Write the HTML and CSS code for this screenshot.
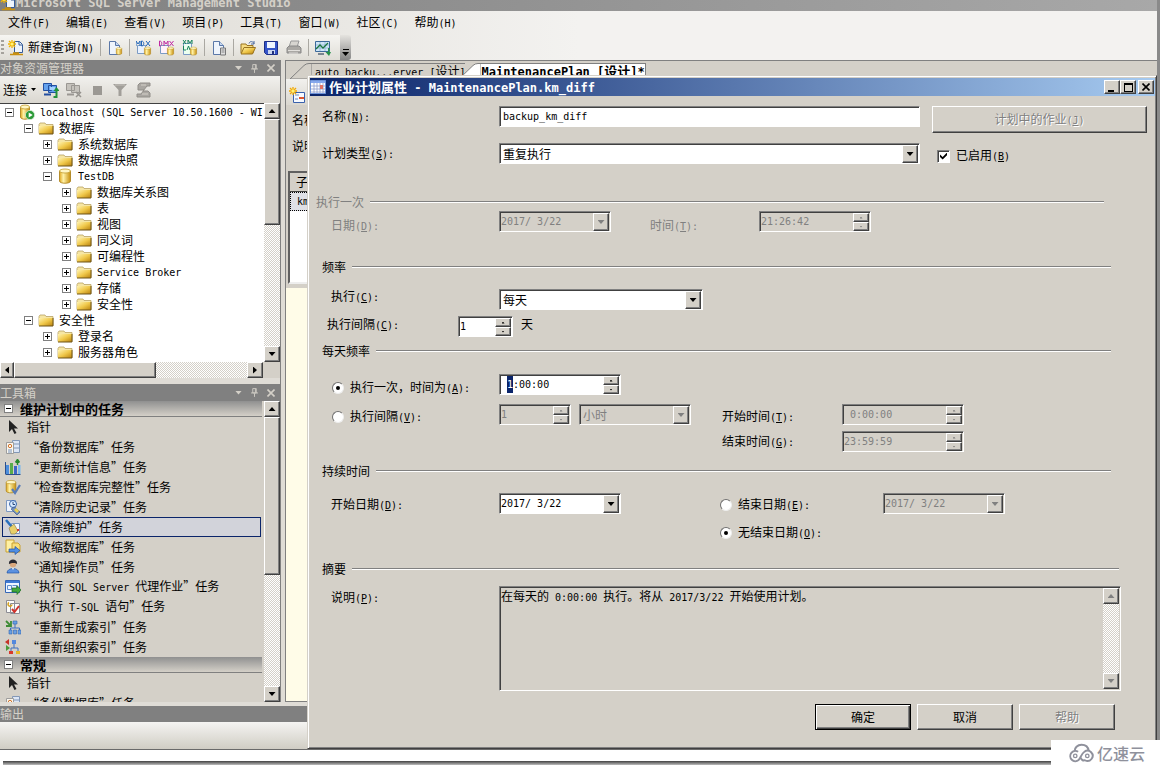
FILE: index.html
```html
<!DOCTYPE html>
<html lang="zh-CN">
<head>
<meta charset="utf-8">
<title>Microsoft SQL Server Management Studio</title>
<link rel="stylesheet" href="styles.css">
</head>
<body>
<svg class="defs" aria-hidden="true">
  <defs>
    <linearGradient id="gold" x1="0" y1="0" x2="1" y2="1"><stop offset="0" stop-color="#fff3b0"/><stop offset=".5" stop-color="#f0c84a"/><stop offset="1" stop-color="#b8800c"/></linearGradient>
    <linearGradient id="cyl" x1="0" x2="1"><stop offset="0" stop-color="#e0a820"/><stop offset=".35" stop-color="#fff2a8"/><stop offset="1" stop-color="#c8900c"/></linearGradient>
  </defs>
  <symbol id="folder" viewBox="0 0 16 16"><path d="M1 4.500 2 3h5l1 1.500h7v9H1z" fill="#f6e6a4" stroke="#b9a264" stroke-width=".8"/><path d="M1 6h14v8H1z" fill="url(#gold)"/><path d="M15 6v8H1" fill="none" stroke="#6e5518"/></symbol>
  <symbol id="db" viewBox="0 0 16 16"><path d="M2.500 3v10c0 3 11 3 11 0V3z" fill="url(#cyl)" stroke="#a87c14" stroke-width=".8"/><ellipse cx="8" cy="3" rx="5.500" ry="2" fill="#fff6c4" stroke="#c09a2c" stroke-width=".8"/></symbol>
  <symbol id="server" viewBox="0 0 16 16"><path d="M1.500 3v10c0 3 9 3 9 0V3z" fill="url(#cyl)" stroke="#a87c14" stroke-width=".8"/><ellipse cx="6" cy="3" rx="4.500" ry="2" fill="#fff6c4" stroke="#c09a2c" stroke-width=".8"/><circle cx="11" cy="11" r="4.600" fill="#2c9a38" stroke="#d6ecd6" stroke-width=".8"/><path d="m9.700 8.500 4 2.500-4 2.500z" fill="#fff"/></symbol>
  <symbol id="page" viewBox="0 0 16 16"><path d="M2.500 1.500h6l4 4v9h-10z" fill="#eef4fc" stroke="#5b78a8"/><path d="M8.500 1.500v4h4" fill="#c7d8f0" stroke="#5b78a8"/></symbol>
  <symbol id="newquery" viewBox="0 0 16 16"><path d="M6.500 1.500h5l3 3v8h-8z" fill="#eef4fc" stroke="#345a98"/><path d="M11 2v3h3" fill="none" stroke="#345a98"/><path d="M4 0v8M0 4h8M1 1l6 6M7 1 1 7" stroke="#f2b400" stroke-width="1.300"/><circle cx="4" cy="4" r="1.600" fill="#fff27a"/><path d="M2 14.500h13M5 13h6" stroke="#c89010" stroke-width="1.600"/></symbol>
  <symbol id="pagedb" viewBox="0 0 16 16"><use href="#page"/><use href="#db" x="8" y="6" width="8" height="10"/></symbol>
  <symbol id="pagetool" viewBox="0 0 16 16"><use href="#page"/><path d="M9.500 8h5v7h-5z" fill="#dedede" stroke="#777"/><path d="M10.500 10h3m-3 2h3" stroke="#888"/></symbol>
  <symbol id="mdx" viewBox="0 0 16 16"><path d="M1.500 5.500h8v8h-8z" fill="#e9f2ff" stroke="#7b9bc4"/><path d="M0 6V1l2 3 2-3v5M5.500 1v5c3 0 3-5 0-5M10 1l4 5m0-5-4 5" fill="none" stroke="#2366b8"/><use href="#db" x="7" y="6" width="9" height="10"/></symbol>
  <symbol id="dmx" viewBox="0 0 16 16"><path d="M1.500 5.500h8v8h-8z" fill="#fff2fb" stroke="#7b9bc4"/><path d="M.5 1v5c3 0 3-5 0-5M5 6V1l2 3 2-3v5M10.500 1l4 5m0-5-4 5" fill="none" stroke="#c02aa2"/><use href="#db" x="7" y="6" width="9" height="10"/></symbol>
  <symbol id="xmla" viewBox="0 0 16 16"><path d="M1.500 3.500h8v11h-8z" fill="#ecfff0" stroke="#7b9bc4"/><path d="m1 0 3 4m0-4L1 4M6 4V0l2 3 2-3v4M1.500 6v4H4M5 10l1.500-4L8 10" fill="none" stroke="#16845a"/><use href="#db" x="7" y="6" width="9" height="10"/></symbol>
  <symbol id="open" viewBox="0 0 16 16"><path d="M1 4h5l1 1.500h6V13H1z" fill="#f7dc82" stroke="#9a7420"/><path d="m1 14 3-6.500h11.500L12.500 14z" fill="url(#gold)" stroke="#9a7420"/><path d="M9 3.500c1-3 4-2 5 0m0-2.500v3h-3" fill="none" stroke="#49679c"/></symbol>
  <symbol id="save" viewBox="0 0 16 16"><path d="M1.500 1.500h13v13h-11l-2-2z" fill="#3454c8" stroke="#1d2e86"/><path d="M4 2h8v6H4z" fill="#eef5ff"/><path d="M5 10h7v4H5z" fill="#c8d4ef"/><path d="M9 11h2v3H9z" fill="#20307c"/></symbol>
  <symbol id="print" viewBox="0 0 16 16"><path d="M5 1h8l-2 6H3z" fill="#d7d5d0" stroke="#999"/><path d="M1 8l2-2h10l2 2v5H1z" fill="#aaa8a4" stroke="#888"/><path d="M2 10.500h12M3 13h9" stroke="#e2e0dc"/></symbol>
  <symbol id="monitor" viewBox="0 0 16 16"><path d="M.5 1.500h14v10H.5z" fill="#cfe5f7" stroke="#3c6a9a"/><path d="M1 5h13M1 8h13M5 2v9m5-9v9" stroke="#7ba5c8" stroke-width=".6"/><path d="m1 9 4-4 3 3 5-5" fill="none" stroke="#1c7540" stroke-width="1.300"/><path d="M3 14h6" stroke="#567" stroke-width="1.500"/><path d="M13 8v4h-2.500l3.500 4 2-4h-1.500V8z" fill="#27914c"/></symbol>
  <symbol id="connect" viewBox="0 0 16 16"><path d="M.5 1.500h8v7h-8zM5.500 3.500h8v7h-8z" fill="#64a2ee" stroke="#234fa0"/><path d="M7 5h5v3H7z" fill="#a5d2ff"/><path d="M1 12.500h7" stroke="#234fa0" stroke-width="2"/><path d="M13.500 8v7h-3" fill="none" stroke="#22923a" stroke-width="2"/><path d="m10.500 9 3-4 3 4z" fill="#22923a"/></symbol>
  <symbol id="disconnect" viewBox="0 0 16 16"><path d="M.5 1.500h8v7h-8zM5.500 3.500h8v7h-8z" fill="#c5c2bc" stroke="#9a9792"/><path d="M1 12.500h7" stroke="#9a9792" stroke-width="2"/><path d="m10 10 5 5m0-5-5 5" stroke="#96938e" stroke-width="1.500"/></symbol>
  <symbol id="stop" viewBox="0 0 16 16"><path d="M4 4h9v9H4z" fill="#9b9893"/></symbol>
  <symbol id="filter" viewBox="0 0 16 16"><path d="M1 2h14L9.500 8v6H6.500V8z" fill="#a19e99"/><path d="M3 3h10" stroke="#c5c2bc"/></symbol>
  <symbol id="script" viewBox="0 0 16 16"><path d="M5 1h10v3h-3l-4 5h5l2 2v4H2v-3h4l3-4H3V3z" fill="#aaa7a2" stroke="#918e89"/><path d="M6 3h5M7 12h6" stroke="#d4d0c8"/></symbol>
  <symbol id="pin" viewBox="0 0 8 10"><path d="M2 .5h4v5H2zM0 5.500h8M4 6v4M5 1v4" fill="none" stroke="#d4d0c8"/></symbol>
  <symbol id="cross" viewBox="0 0 8 8"><path d="m.5.5 7 7m0-7-7 7" stroke="currentColor" stroke-width="1.600"/></symbol>
  <symbol id="pointer" viewBox="0 0 16 16"><path d="M4 1v12l3-3 2.500 5 2-1L9 9.500h4z" fill="#222"/></symbol>
  <symbol id="backup" viewBox="0 0 16 16"><path d="M7.500 1.500h7v12h-7z" fill="#dce6f6" stroke="#8297b6"/><path d="M8 5h6M8 9h6" stroke="#8297b6"/><path d="M1.500 3.500h7v11h-7z" fill="#fbf7ee" stroke="#9d9d9d"/><circle cx="5" cy="7" r="1.700" fill="none" stroke="#d2742c"/><path d="M3 11h4M3 13h4" stroke="#7390bb"/></symbol>
  <symbol id="stats" viewBox="0 0 16 16"><path d="M1 6h3v9H1z" fill="#4d8edc"/><path d="M5 4h3v11H5z" fill="#58ac4c"/><path d="M9 7h3v8H9z" fill="#3d66c6"/><path d="M13 6h2.500v9H13z" fill="#78b8ee"/><path d="M.5 15.500h15M.5 3v12" stroke="#2b4f8c"/><path d="M12.500 6V1m-2 2.500 2-3 2 3" fill="none" stroke="#23882a" stroke-width="1.500"/></symbol>
  <symbol id="check" viewBox="0 0 16 16"><use href="#db" x="-1" width="14" height="15"/><path d="m7 10 3 4 5-8" fill="none" stroke="#587cb8" stroke-width="2.200"/></symbol>
  <symbol id="history" viewBox="0 0 16 16"><path d="M1.500 1.500h9v11h-9z" fill="#eef4fc" stroke="#7d98c0"/><circle cx="8" cy="5" r="3.500" fill="#d7eaff" stroke="#3865aa"/><path d="M8 3v2.500h2" fill="none" stroke="#28487c"/><path d="m6 10 3-2 6 5-3 3z" fill="#6f8fc0" stroke="#344f80" stroke-width=".6"/><path d="m9 11 2-2 3 3-2 2z" fill="#e8cf54"/></symbol>
  <symbol id="clean" viewBox="0 0 16 16"><path d="M6.500 4.500h8v10h-8z" fill="#f4f6fb" stroke="#7d98c0"/><path d="m1 1 6 7" stroke="#2b71bd" stroke-width="2.600"/><path d="m4 9 5-4 4 7-3 3H6z" fill="#e7cf6a" stroke="#7c7348" stroke-width=".6"/><path d="M12 10h2v2h-2z" fill="#d83a2c"/></symbol>
  <symbol id="shrink" viewBox="0 0 16 16"><path d="M1 1h8v12H1z" fill="#fff0a2" stroke="#caa232"/><path d="M7 4h6l2 2v7H7z" fill="#f8dd79" stroke="#caa232"/><path d="M4 10h6V7.500l5 4-5 4V13H4z" fill="#4f8fe4" stroke="#2450a0" stroke-width=".7"/></symbol>
  <symbol id="operator" viewBox="0 0 16 16"><path d="M2 14c0-6 12-6 12 0z" fill="#5b91e0" stroke="#2456a8" stroke-width=".7"/><circle cx="8" cy="5" r="3.300" fill="#d9a77c"/><path d="M4 5c-1-6 9-6 8 0L10 4H7z" fill="#282830"/><path d="m7 9 1 2 1-2z" fill="#fff"/></symbol>
  <symbol id="agent" viewBox="0 0 16 16"><path d="M.5 1.500h14v12H.5z" fill="#edf5ff" stroke="#3466b6"/><path d="M1 2h13v2H1z" fill="#3e79d4"/><path d="M2.500 6.500h4v4h-4zm5 0h4v4" fill="none" stroke="#5e8ccc"/><path d="M7 9h5V6.500l4 4.500-4 4.500V13H7z" fill="#40a83c" stroke="#1e6c22" stroke-width=".7"/></symbol>
  <symbol id="tsql" viewBox="0 0 16 16"><path d="M1.500 1.500h8v12h-8zM5.500 4.500h9v10h-9z" fill="#fcfcfa" stroke="#8c8c94"/><path d="M4 3.500a2 2 0 1 0 3 2" fill="none" stroke="#d4a01c" stroke-width="1.500"/><path d="m7 10 2.500 3L14 7" fill="none" stroke="#d2312a" stroke-width="2"/></symbol>
  <symbol id="rebuild" viewBox="0 0 16 16"><path d="m1 2 5 5m0-5v5H1" fill="none" stroke="#3f8c35" stroke-width="1.800"/><path d="M10 5v4M5.500 12V9h9v3" fill="none" stroke="#3b6fc0"/><path d="M8 2h4v3H8zM4 11h3v4H4zm4.500 0h3v4h-3zM13 11h3v4h-3z" fill="#69a0e4" stroke="#3465ae" stroke-width=".6"/></symbol>
  <symbol id="reorg" viewBox="0 0 16 16"><path d="M0 3 4 0v6z" fill="#c73228"/><path d="M5 9 1 6v6z" fill="#4a9a3a"/><path d="M9 5v4M6 13V9h7v4" fill="none" stroke="#3b6fc0"/><path d="M7 1h4v4H7z" fill="#5388dd"/><path d="M4 12h4v3H4z" fill="#d8392b"/><path d="M11 12h4v3h-4z" fill="#e7b928"/></symbol>
  <symbol id="addplan" viewBox="0 0 16 16"><path d="M4.500 5.500h11v10h-11z" fill="#f6f9ff" stroke="#3a61ac"/><path d="M6 8h4M6 12h3" stroke="#6b8cc6"/><path d="M10 10h5v2h-5z" fill="#e0562e"/><path d="M4 0v8M0 4h8M1 1l6 6M7 1 1 7" stroke="#f2a800" stroke-width="1.300"/><circle cx="4" cy="4" r="1.700" fill="#fff27a"/></symbol>
  <symbol id="calendar" viewBox="0 0 16 16"><path d="M.5 1.500h15v13H.5z" fill="#fff" stroke="#6d92d8"/><path d="M1 2h14v2H1z" fill="#86a8ec"/><path d="M1 7h14M1 10h14M1 13h14M4 4v10m3-10v10m3-10v10m3-10v10" stroke="#8d9ccb" stroke-width=".8"/><path d="M10 6h3v4h-3z" fill="#e07264"/></symbol>
</svg>

<div class="app">
  <header class="apptitle"><svg class="i"><use href="#newquery"/></svg><span>Microsoft SQL Server Management Studio</span></header>
  <nav class="menu">
    <button>文件<span class="en">(F)</span></button><button>编辑<span class="en">(E)</span></button><button>查看<span class="en">(V)</span></button><button>项目<span class="en">(P)</span></button><button>工具<span class="en">(T)</span></button><button>窗口<span class="en">(W)</span></button><button>社区<span class="en">(C)</span></button><button>帮助<span class="en">(H)</span></button>
  </nav>
  <div class="toolbar">
    <div class="strip">
      <span class="grip"></span>
      <button class="tool"><svg class="i"><use href="#newquery"/></svg><span>新建查询<span class="en">(N)</span></span></button><i class="sep"></i>
      <button class="tool" aria-label="数据库引擎查询"><svg class="i"><use href="#pagedb"/></svg></button><i class="sep"></i>
      <button class="tool" aria-label="MDX"><svg class="i"><use href="#mdx"/></svg></button>
      <button class="tool" aria-label="DMX"><svg class="i"><use href="#dmx"/></svg></button>
      <button class="tool" aria-label="XMLA"><svg class="i"><use href="#xmla"/></svg></button><i class="sep"></i>
      <button class="tool" aria-label="Compact 查询"><svg class="i"><use href="#pagetool"/></svg></button><i class="sep"></i>
      <button class="tool" aria-label="打开"><svg class="i"><use href="#open"/></svg></button>
      <button class="tool" aria-label="保存"><svg class="i"><use href="#save"/></svg></button>
      <button class="tool" aria-label="打印"><svg class="i"><use href="#print"/></svg></button><i class="sep"></i>
      <button class="tool" aria-label="活动监视器"><svg class="i"><use href="#monitor"/></svg></button>
    </div>
    <button class="more" aria-label="更多"><i class="bar"></i><i class="down"></i></button>
  </div>

  <main class="work">
    <aside class="side">
      <section class="panel explorer">
        <h2 class="ptitle"><span>对象资源管理器</span><i class="down"></i><svg class="pin"><use href="#pin"/></svg><svg class="x"><use href="#cross"/></svg></h2>
        <div class="ptools">
          <button class="tool">连接<i class="down small"></i></button>
          <svg class="i"><use href="#connect"/></svg><svg class="i"><use href="#disconnect"/></svg><svg class="i"><use href="#stop"/></svg><svg class="i"><use href="#filter"/></svg><svg class="i"><use href="#script"/></svg>
        </div>
        <div class="scrollpane">
          <ul class="tree">
            <li class="l0"><i class="box"></i><svg><use href="#server"/></svg><span class="en">localhost (SQL Server 10.50.1600 - WI</span></li>
            <li class="l1"><i class="box"></i><svg><use href="#folder"/></svg>数据库</li>
            <li class="l2"><i class="box plus"></i><svg><use href="#folder"/></svg>系统数据库</li>
            <li class="l2"><i class="box plus"></i><svg><use href="#folder"/></svg>数据库快照</li>
            <li class="l2"><i class="box"></i><svg><use href="#db"/></svg><span class="en">TestDB</span></li>
            <li class="l3"><i class="box plus"></i><svg><use href="#folder"/></svg>数据库关系图</li>
            <li class="l3"><i class="box plus"></i><svg><use href="#folder"/></svg>表</li>
            <li class="l3"><i class="box plus"></i><svg><use href="#folder"/></svg>视图</li>
            <li class="l3"><i class="box plus"></i><svg><use href="#folder"/></svg>同义词</li>
            <li class="l3"><i class="box plus"></i><svg><use href="#folder"/></svg>可编程性</li>
            <li class="l3"><i class="box plus"></i><svg><use href="#folder"/></svg><span class="en">Service Broker</span></li>
            <li class="l3"><i class="box plus"></i><svg><use href="#folder"/></svg>存储</li>
            <li class="l3"><i class="box plus"></i><svg><use href="#folder"/></svg>安全性</li>
            <li class="l1"><i class="box"></i><svg><use href="#folder"/></svg>安全性</li>
            <li class="l2"><i class="box plus"></i><svg><use href="#folder"/></svg>登录名</li>
            <li class="l2"><i class="box plus"></i><svg><use href="#folder"/></svg>服务器角色</li>
          </ul>
          <div class="vscroll"><button aria-label="向上"><i class="up"></i></button><span class="thumb t1"></span><button class="last" aria-label="向下"><i class="down"></i></button></div>
        </div>
        <div class="hscroll"><button aria-label="向左"><i class="left"></i></button><span class="thumb"></span><button class="last" aria-label="向右"><i class="right"></i></button></div>
      </section>
      <section class="panel toolbox">
        <h2 class="ptitle"><span>工具箱</span><i class="down"></i><svg class="pin"><use href="#pin"/></svg><svg class="x"><use href="#cross"/></svg></h2>
        <div class="scrollpane">
          <div class="items">
            <h3><i class="box"></i>维护计划中的任务</h3>
            <ul>
              <li><svg class="i"><use href="#pointer"/></svg>指针</li>
              <li><svg class="i"><use href="#backup"/></svg>“备份数据库”任务</li>
              <li><svg class="i"><use href="#stats"/></svg>“更新统计信息”任务</li>
              <li><svg class="i"><use href="#check"/></svg>“检查数据库完整性”任务</li>
              <li><svg class="i"><use href="#history"/></svg>“清除历史记录”任务</li>
              <li class="on"><svg class="i"><use href="#clean"/></svg>“清除维护”任务</li>
              <li><svg class="i"><use href="#shrink"/></svg>“收缩数据库”任务</li>
              <li><svg class="i"><use href="#operator"/></svg>“通知操作员”任务</li>
              <li><svg class="i"><use href="#agent"/></svg><span>“执行<span class="en"> SQL Server </span>代理作业”任务</span></li>
              <li><svg class="i"><use href="#tsql"/></svg><span>“执行<span class="en"> T-SQL </span>语句”任务</span></li>
              <li><svg class="i"><use href="#rebuild"/></svg>“重新生成索引”任务</li>
              <li><svg class="i"><use href="#reorg"/></svg>“重新组织索引”任务</li>
            </ul>
            <h3><i class="box"></i>常规</h3>
            <ul>
              <li><svg class="i"><use href="#pointer"/></svg>指针</li>
              <li><svg class="i"><use href="#backup"/></svg>“备份数据库”任务</li>
            </ul>
          </div>
          <div class="vscroll"><button aria-label="向上"><i class="up"></i></button><span class="thumb t2"></span><button class="last" aria-label="向下"><i class="down"></i></button></div>
        </div>
      </section>
    </aside>
    <section class="doc">
      <div class="tabs">
        <div class="tab"><svg class="slant" viewBox="0 0 22 16"><path d="M0 16 14 2.500Q16 .5 19 .5H22V16z"/></svg><span><span class="en">auto_backu...erver [</span>设计<span class="en">]</span></span></div>
        <div class="tab active"><svg class="slant" viewBox="0 0 22 16"><path d="M0 16 14 2.500Q16 .5 19 .5H22V16z"/></svg><span><span class="en">MaintenancePlan [</span>设计<span class="en">]*</span></span></div>
      </div>
      <div class="doctools"><svg class="i"><use href="#addplan"/></svg></div>
      <p>名称</p>
      <p>说明</p>
      <div class="plans"><b>子</b><span class="en">km</span></div>
      <div class="canvas"></div>
    </section>
  </main>
  <h2 class="ptitle out"><span>输出</span></h2>
  <div class="output"></div>
</div>
<div class="edge"></div>

<form class="dialog" role="dialog" aria-labelledby="dt">
  <div class="dtitle">
    <svg class="i"><use href="#calendar"/></svg><h1 id="dt">作业计划属性<span class="en"> - MaintenancePlan.km_diff</span></h1>
    <button type="button" aria-label="最小化"><i class="min"></i></button><button type="button" aria-label="最大化"><i class="max"></i></button><button type="button" class="close" aria-label="关闭"><svg><use href="#cross"/></svg></button>
  </div>
  <div class="body">
    <div class="row name">
      <label class="lab" for="n">名称<span class="en">(<u>N</u>):</span></label>
      <span class="field grow"><input id="n" value="backup_km_diff"></span>
      <button type="button" class="btn jobs" disabled>计划中的作业<span class="en">(<u>J</u>)</span></button>
    </div>
    <div class="row type">
      <label class="lab" for="t">计划类型<span class="en">(<u>S</u>):</span></label>
      <span class="field grow"><select id="t"><option>重复执行</option></select><i class="drop"></i></span>
      <label class="enabled"><input type="checkbox" checked><span>已启用<span class="en">(<u>B</u>)</span></span></label>
    </div>

    <h4 class="once"><span>执行一次</span></h4>
    <div class="row oncerow">
      <label class="lab in" for="d">日期<span class="en">(<u>D</u>):</span></label>
      <span class="field w112"><input id="d" value="2017/ 3/22" disabled><button type="button" class="drop" disabled aria-label="选择日期"></button></span>
      <label class="mid" for="tm">时间<span class="en">(<u>T</u>):</span></label>
      <span class="field w112"><input id="tm" value="21:26:42" disabled><span class="spin"><button type="button" disabled aria-label="加"></button><button type="button" disabled aria-label="减"></button></span></span>
    </div>

    <h4 class="freq"><span>频率</span></h4>
    <div class="row exec">
      <label class="lab in" for="e">执行<span class="en">(<u>C</u>):</span></label>
      <span class="field w204"><select id="e"><option>每天</option></select><i class="drop"></i></span>
    </div>
    <div class="row every">
      <label class="lab" for="ev">执行间隔<span class="en">(<u>C</u>):</span></label>
      <span class="field w55"><input id="ev" value="1"><span class="spin"><button type="button" aria-label="加"></button><button type="button" aria-label="减"></button></span></span>
      <span class="unit">天</span>
    </div>

    <h4 class="daily"><span>每天频率</span></h4>
    <div class="row at">
      <label class="lab radio"><input type="radio" name="f" checked><span>执行一次，时间为<span class="en">(<u>A</u>):</span></span></label>
      <span class="field w122"><input id="time" aria-label="时间" value=" 1:00:00"><span class="spin"><button type="button" aria-label="加"></button><button type="button" aria-label="减"></button></span></span>
    </div>
    <div class="row gapr">
      <label class="lab radio"><input type="radio" name="f"><span>执行间隔<span class="en">(<u>V</u>):</span></span></label>
      <div class="pair">
        <span class="field w72"><input aria-label="间隔" value="1" disabled><span class="spin"><button type="button" disabled aria-label="加"></button><button type="button" disabled aria-label="减"></button></span></span>
        <span class="field w112"><select aria-label="单位" disabled><option>小时</option></select><i class="drop off"></i></span>
      </div>
      <label class="second" for="st">开始时间<span class="en">(<u>T</u>):</span></label>
      <span class="field w122"><input id="st" value=" 0:00:00" disabled><span class="spin"><button type="button" disabled aria-label="加"></button><button type="button" disabled aria-label="减"></button></span></span>
    </div>
    <div class="row endt">
      <span class="lab"></span><div class="pair"></div>
      <label class="second" for="et">结束时间<span class="en">(<u>G</u>):</span></label>
      <span class="field w122"><input id="et" value="23:59:59" disabled><span class="spin"><button type="button" disabled aria-label="加"></button><button type="button" disabled aria-label="减"></button></span></span>
    </div>

    <h4 class="span"><span>持续时间</span></h4>
    <div class="row dates">
      <label class="lab in" for="sd">开始日期<span class="en">(<u>D</u>):</span></label>
      <div class="pair"><span class="field w122"><input id="sd" value="2017/ 3/22"><button type="button" class="drop" aria-label="选择日期"></button></span></div>
      <label class="radio2"><input type="radio" name="g"><span>结束日期<span class="en">(<u>E</u>):</span></span></label>
      <span class="field w122"><input aria-label="结束日期" value="2017/ 3/22" disabled><button type="button" class="drop" disabled aria-label="选择日期"></button></span>
    </div>
    <div class="row noend">
      <span class="lab"></span><div class="pair"></div>
      <label class="radio2"><input type="radio" name="g" checked><span>无结束日期<span class="en">(<u>O</u>):</span></span></label>
    </div>

    <h4 class="sum"><span>摘要</span></h4>
    <div class="row desc">
      <label class="lab in">说明<span class="en">(<u>P</u>):</span></label>
      <div class="field memo" tabindex="0"><p>在每天的<span class="en"> 0:00:00 </span>执行。将从<span class="en"> 2017/3/22 </span>开始使用计划。</p>
        <div class="vscroll off"><button type="button" disabled aria-label="向上"><i class="up"></i></button><button type="button" class="last" disabled aria-label="向下"><i class="down"></i></button></div></div>
    </div>
    <div class="actions"><button type="button" class="btn ok">确定</button><button type="button" class="btn">取消</button><button type="button" class="btn" disabled>帮助</button></div>
  </div>
</form>
<div class="mark"><svg viewBox="0 0 28 20"><path d="M7 8C6.500 4.500 10 1.500 14 1.500S21 4 21.500 8" fill="none" stroke="#8f919c" stroke-width="2.200"/><path d="M10.500 8.700A5.300 5.300 0 1 0 11 17.300C13 15.500 14 10.500 17 8.700A5.300 5.300 0 1 1 17.500 17.500C15.500 18.500 13.500 16.500 13 14.500" fill="none" stroke="#8f919c" stroke-width="2"/><circle cx="7.500" cy="13" r="1.800" fill="none" stroke="#8f919c" stroke-width="1.400"/><circle cx="20" cy="13" r="1.800" fill="none" stroke="#8f919c" stroke-width="1.400"/></svg><span>亿速云</span></div>
<script src="script.js"></script>
</body>
</html>
```

FILE: styles.css
```css
* { box-sizing: border-box; }
:root {
  --face: #d4d0c8;
  --check: conic-gradient(#fff 25%, #d4d0c8 0 50%, #fff 0 75%, #d4d0c8 0) 0 0 / 2px 2px;
}
html, body { height: 100%; margin: 0; }
body {
  display: flex;
  flex-direction: column;
  overflow: hidden;
  background: #fff;
  color: #000;
  font: 12px/16px "Noto Sans CJK SC", sans-serif;
}
h1, h2, h3, h4, p, ul { margin: 0; padding: 0; font-size: 12px; font-weight: normal; list-style: none; }
button, input, select { font: inherit; color: inherit; padding: 0; margin: 0; border: 0; background: none; border-radius: 0; outline: 0; }
.en { font-family: "DejaVu Sans Mono", "Noto Sans CJK SC", monospace; font-size: 10px; white-space: pre; }
.defs { position: absolute; width: 0; height: 0; }
.i { width: 16px; height: 16px; flex: none; }

.up, .down, .left, .right { display: block; flex: none; background: currentColor; }
.up, .down { width: 7px; height: 4px; }
.left, .right { width: 4px; height: 7px; }
.up { clip-path: polygon(50% 0, 100% 100%, 0 100%); }
.down { clip-path: polygon(0 0, 100% 0, 50% 100%); }
.left { clip-path: polygon(100% 0, 100% 100%, 0 50%); }
.right { clip-path: polygon(0 0, 100% 50%, 0 100%); }
.small { width: 5px; height: 3px; }

/* Main window */
.app { flex: 1; min-height: 0; display: flex; flex-direction: column; background: #dfdcd6; border-bottom: 1px solid #6a6a6a; border-right: 3px solid #8a8a8a; }
.apptitle { display: flex; align-items: flex-end; height: 11px; flex: none; overflow: hidden; background: linear-gradient(90deg, #808080, #a8a8a8); color: #d4d0c8; font: bold 12px/16px "DejaVu Sans Mono", monospace; }
.menu { display: flex; gap: 16px; height: 24px; flex: none; padding-left: 8px; background: linear-gradient(90deg, #dcd9d2, #f3f2f0 50%); }
.toolbar { display: flex; height: 25px; flex: none; background: linear-gradient(90deg, #dcd9d2, #f3f2f0 50%); }
.strip { display: flex; align-items: center; gap: 7px; padding: 0 9px 0 1px; background: linear-gradient(#f6f5f2, #dfddd6); }
.grip { width: 3px; height: 15px; margin-right: -3px; background: repeating-linear-gradient(#a5a29c 0 2px, transparent 2px 4px); }
.tool { display: flex; align-items: center; gap: 4px; }
.sep { width: 1px; height: 17px; margin: 0 -1px; background: #aaa8a2; }
.more { width: 11px; display: flex; flex-direction: column; align-items: center; justify-content: flex-end; gap: 2px; padding-bottom: 4px; background: linear-gradient(#e5e3df, #858585); border-radius: 0 3px 3px 0; }
.bar { width: 6px; height: 1px; background: #000; }

.work { flex: 1; min-height: 0; display: flex; gap: 4px; }
.side { width: 281px; flex: none; display: flex; flex-direction: column; gap: 6px; margin-bottom: 4px; border-right: 1px solid #808080; }
.panel { display: flex; flex-direction: column; min-height: 0; background: var(--face); }
.explorer { height: 318px; flex: none; }
.toolbox { flex: 1; }
.ptitle { display: flex; align-items: center; gap: 9px; height: 16px; flex: none; padding: 0 5px 0 0; background: #808080; color: #d4d0c8; }
.toolbox .ptitle { height: 17px; }
.ptitle span { flex: 1; }
.pin { width: 7px; height: 9px; }
.x { width: 8px; height: 8px; }
.ptools { display: flex; align-items: center; gap: 7px; height: 27px; flex: none; padding-left: 3px; background: linear-gradient(#f2f1ee, #dad7d0); }
.scrollpane { flex: 1; min-height: 0; display: flex; }
.tree { flex: 1; min-width: 0; overflow: hidden; background: #fff; border-top: 1px solid #404040; }
.tree li { display: flex; align-items: center; gap: 5px; height: 16px; white-space: nowrap; }
.tree svg { width: 16px; height: 16px; flex: none; }
.tree .en { padding-top: 1px; }
.l0 { padding-left: 5px; }
.l1 { padding-left: 24px; }
.l2 { padding-left: 43px; }
.l3 { padding-left: 62px; }
.box { width: 9px; height: 9px; flex: none; border: 1px solid #808080; background: linear-gradient(#000, #000) center / 5px 1px no-repeat #fff; }
.box.plus { background: linear-gradient(#000, #000) center / 5px 1px no-repeat, linear-gradient(#000, #000) center / 1px 5px no-repeat #fff; }

.vscroll { width: 16px; flex: none; display: flex; flex-direction: column; background: var(--check); }
.hscroll { height: 16px; flex: none; display: flex; margin-right: 17px; background: var(--check); }
.vscroll button, .hscroll button, .thumb, .drop, .spin button, .dtitle button, .btn {
  background: var(--face);
  border: 1px solid;
  border-color: #fff #404040 #404040 #fff;
  box-shadow: inset -1px -1px #808080;
}
.vscroll button, .hscroll button { width: 16px; height: 16px; flex: none; display: flex; align-items: center; justify-content: center; }
.hscroll button:first-child { width: 14px; }
.hscroll .thumb { width: 142px; }
.t1 { height: 106px; }
.t2 { height: 158px; }
.vscroll .last { margin-top: auto; }
.hscroll .last { margin-left: auto; }

.items { flex: 1; min-width: 0; overflow: hidden; margin-right: 2px; }
.items h3 { display: flex; align-items: center; gap: 7px; height: 16px; padding-left: 4px; font-size: 13px; line-height: 15px; font-weight: bold; background: linear-gradient(#909090, #d4d0c8); border-bottom: 1px solid #808080; }
.items li { display: flex; align-items: center; gap: 6px; height: 20px; padding-left: 4px; border: 1px solid transparent; white-space: nowrap; }
.items .on { border-color: #0a246a; background: #d2d3da; margin: 0 1px 0 2px; padding-left: 2px; }

.doc { flex: 1; min-width: 0; display: flex; flex-direction: column; overflow: hidden; background: var(--face); border-left: 1px solid #808080; border-top: 1px solid #808080; margin-bottom: 4px; }
.tabs { display: flex; height: 18px; flex: none; padding-top: 2px; }
.tab { display: flex; line-height: 14px; padding-right: 8px; }
.tab > span { border-top: 1px solid #808080; padding-left: 3px; }
.slant { width: 22px; height: 16px; fill: var(--face); stroke: #808080; }
.tab:first-child { padding-left: 4px; }
.tab.active { font-weight: bold; font-size: 13px; padding-right: 0; }
.tab.active .en { font-size: 12px; }
.tab.active .slant { fill: #fff; margin-left: -14px; }
.tab.active > span { background: #fff; border-right: 1px solid #808080; padding-left: 0; }
.doctools { height: 26px; flex: none; padding: 8px 3px; background: linear-gradient(#f2f1ee, #dad7d0); }
.doc p { height: 26px; padding: 7px 0 0 6px; flex: none; }
.plans { display: flex; flex-direction: column; height: 113px; flex: none; margin: 14px 0 4px 2px; border: 2px solid #606060; border-right: 0; border-bottom-color: #eee; background: #fff; }
.plans b, .plans span { height: 19px; padding: 1px 6px; font-weight: normal; background: var(--face); border-bottom: 1px solid #404040; }
.plans span { background: #dfe0e6; border: 1px dotted #000; }
.canvas { flex: 1; background: #fffce8; border-bottom: 1px solid #808080; }
.out { width: 100%; }
.output { height: 27px; flex: none; background: linear-gradient(#f5f4f2, #d0cdc4); }
.edge { height: 4px; flex: none; margin: 11px 0 0 3px; background: linear-gradient(#404040, #bdbdbd); }

/* Schedule dialog */
.dialog { position: absolute; left: 307px; right: 3px; top: 75px; bottom: 16px; display: flex; flex-direction: column; padding: 1px; background: var(--face); border: 1px solid; border-color: #d4d0c8 #404040 #404040 #d4d0c8; box-shadow: inset 1px 1px #fff, inset -1px -1px #808080; }
.dtitle { display: flex; align-items: center; height: 18px; flex: none; margin: 1px 0 0 1px; padding-right: 1px; background: linear-gradient(90deg, #0a246a, #a6caf0); color: #fff; }
.dtitle h1 { flex: 1; padding-left: 3px; font-size: 13px; font-weight: bold; }
.dtitle .en { font-size: 12px; }
.dtitle button { width: 16px; height: 14px; display: flex; align-items: center; justify-content: center; color: #000; }
.dtitle .close { margin-left: 2px; }
.dtitle button svg { width: 8px; height: 8px; }
.min { width: 6px; height: 2px; margin: 7px 3px 0 0; background: #000; }
.max { width: 9px; height: 9px; border: 1px solid #000; border-top-width: 2px; }

.body { flex: 1; min-height: 0; display: flex; flex-direction: column; padding-bottom: 17px; }
.row { display: flex; align-items: flex-start; flex: none; }
.lab { width: 190px; flex: none; padding-left: 13px; line-height: 20px; }
.lab.in { padding-left: 22px; }
.grow { flex: 1; }
.field { display: flex; height: 21px; flex: none; background: #fff; border: 1px solid; border-color: #808080 #fff #fff #808080; box-shadow: inset 1px 1px #404040; padding: 1px 1px 0 1px; }
.field.grow { flex: 1; }
.field input { flex: 1; min-width: 0; width: 10px; height: 17px; padding-left: 2px; font: 10px/17px "DejaVu Sans Mono", monospace; }
.field:has(.spin) input, .field:has(button.drop) input { padding-left: 0; }
.field select { flex: 1; min-width: 0; appearance: none; padding-left: 2px; line-height: 16px; opacity: 1; }
.field input::selection { background: #0a246a; color: #fff; }
.field:has(:disabled) { background: var(--face); }
.w55 { width: 55px; }
.w72 { width: 72px; }
.w112 { width: 112px; }
.w122 { width: 122px; }
.w204 { width: 204px; }
.drop { display: flex; align-items: center; justify-content: center; width: 16px; flex: none; }
.drop::after { content: ""; width: 7px; height: 4px; background: #000; clip-path: polygon(0 0, 100% 0, 50% 100%); }
.drop:disabled::after, .drop.off::after { background: #808080; }
.spin { width: 16px; flex: none; display: flex; flex-direction: column; }
.spin button { flex: 1; display: flex; align-items: center; justify-content: center; min-height: 0; }
.spin button::after { content: ""; width: 3px; height: 2px; background: #000; clip-path: polygon(50% 0, 100% 100%, 0 100%); }
.spin button:last-child::after { clip-path: polygon(0 0, 100% 0, 50% 100%); }
.spin button:disabled::after { background: #808080; }
:disabled { color: #808080; }

.btn { width: 96px; height: 26px; }
.btn:disabled { color: #808080; text-shadow: 1px 1px #fff; }
.ok { border-color: #000; box-shadow: inset 1px 1px #fff, inset -1px -1px #404040, inset -2px -2px #808080; }
.jobs { width: 215px; height: 27px; margin: 0 8px 0 12px; }

h4 { display: flex; align-items: center; gap: 6px; height: 16px; flex: none; padding: 0 44px 0 13px; }
h4::after { content: ""; flex: 1; height: 2px; background: linear-gradient(#808080 50%, #fff 50%); }

.name { margin-top: 10px; }
.type { margin-top: 10px; height: 24px; }
.enabled { display: flex; align-items: center; gap: 6px; width: 235px; padding-left: 17px; align-self: flex-end; line-height: 20px; }
input[type="checkbox"] { appearance: none; width: 13px; height: 13px; background: #fff; border: 1px solid; border-color: #808080 #fff #fff #808080; box-shadow: inset 1px 1px #404040; }
input[type="checkbox"]:checked::after { content: ""; display: block; width: 7px; height: 7px; margin: 2px; background: #000; clip-path: polygon(0 30%, 38% 65%, 100% 0, 100% 40%, 38% 100%, 0 65%); }
.once { margin-top: 27px; padding: 0 51px 0 7px; color: #808080; }
.oncerow { margin-top: 1px; height: 28px; color: #808080; }
.oncerow label { line-height: 28px; }
.mid { width: 148px; padding-left: 39px; }
.freq { margin-top: 20px; }
.exec { margin-top: 14px; height: 20px; }
.exec .lab { line-height: 14px; }
.every { margin-top: 7px; height: 20px; }
.every .lab { width: 149px; padding-left: 18px; line-height: 16px; }
.unit { padding-left: 8px; }
.daily { margin-top: 7px; }
.at { margin-top: 15px; height: 26px; }
.radio, .radio2 { display: flex; align-items: center; gap: 6px; }
.lab.radio { padding-left: 23px; line-height: 26px; }
input[type="radio"] { appearance: none; width: 12px; height: 12px; flex: none; display: flex; align-items: center; justify-content: center; border-radius: 50%; background: #fff; border: 1px solid; border-color: #707070 #eee #eee #707070; }
input[type="radio"]:checked::after { content: ""; width: 4px; height: 4px; border-radius: 50%; background: #000; }
.gapr { margin-top: 4px; height: 24px; }
.gapr .lab, .gapr .second { line-height: 24px; }
.pair { display: flex; gap: 8px; width: 223px; flex: none; }
.second { width: 120px; line-height: 20px; }
.endt { margin-top: 3px; height: 21px; }
.span { margin-top: 11px; }
.dates { margin-top: 14px; height: 21px; }
.dates .lab, .radio2 { line-height: 22px; }
.radio2 { width: 163px; margin-left: -2px; }
.noend { margin-top: 7px; height: 22px; }
.sum { margin-top: 18px; padding-right: 36px; }
.desc { margin-top: 9px; flex: 1; min-height: 60px; align-items: stretch; }
.desc .lab { line-height: 22px; }
.memo { flex: 1; height: auto; margin-right: 34px; background: var(--face); padding-bottom: 1px; }
.memo p { flex: 1; line-height: 15px; }
.actions { display: flex; justify-content: flex-end; gap: 6px; flex: none; margin: 13px 40px 0 0; }

/* Site mark */
.mark { position: absolute; right: 0; bottom: 0; display: flex; align-items: center; gap: 2px; height: 25px; padding: 0 15px 0 17px; background: #fff; color: #8f919c; font-size: 16px; font-weight: 500; }
.mark svg { width: 27px; height: 20px; }
```

FILE: script.js
```js
const time = document.getElementById("time");
time.focus();
time.setSelectionRange(1, 2);
```
